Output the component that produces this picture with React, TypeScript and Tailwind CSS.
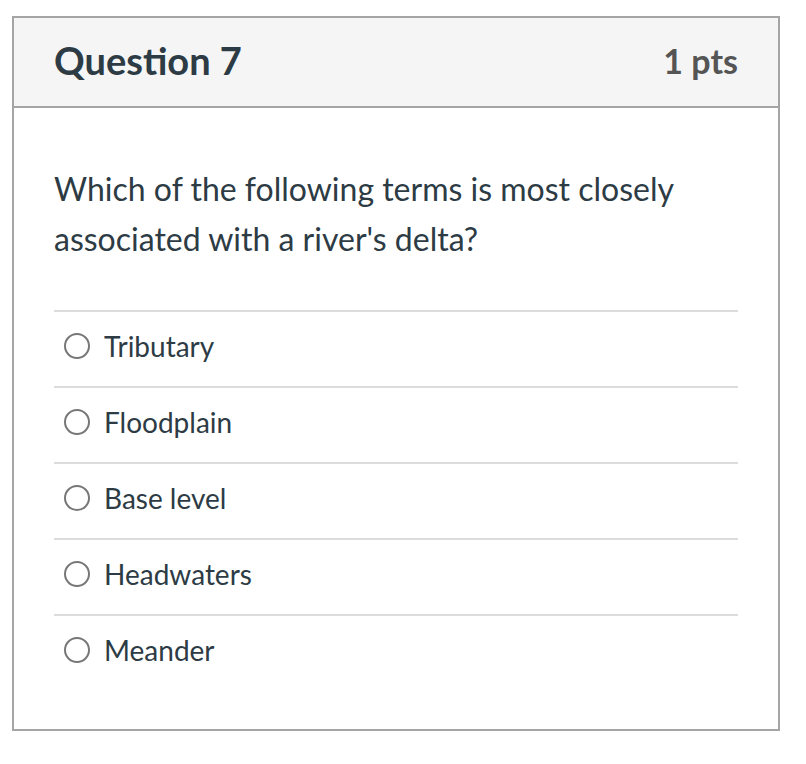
import { useState } from "react";

const answers = ["Tributary", "Floodplain", "Base level", "Headwaters", "Meander"];

export default function App() {
  const [picked, setPicked] = useState<string | null>(null);

  return (
    <div className="min-h-[764px] bg-white pl-3 pt-4 font-['Lato','Liberation_Sans',sans-serif] text-[#2d3b45]">
      <div className="w-[768px] border-2 border-[#a5a5a5]">
        <div className="flex h-[90px] items-center justify-between border-b-2 border-[#a5a5a5] bg-[#f5f5f5] px-10 pb-1">
          <h2 className="text-[38px] font-bold">Question 7</h2>
          <span className="text-[34px] font-bold text-[#555555]">1 pts</span>
        </div>
        <div className="px-10 pb-[39px] pt-[56px]">
          <p className="text-[32px] leading-[50px]">
            Which of the following terms is most closely associated with a river's delta?
          </p>
          <div className="mt-[46px]">
            {answers.map((a) => (
              <label
                key={a}
                className="flex h-[76px] cursor-pointer items-center gap-[14px] border-t-2 border-[#dcdcdc] pb-[7px] pl-[10px]"
              >
                <input
                  type="radio"
                  name="q7"
                  checked={picked === a}
                  onChange={() => setPicked(a)}
                  className="h-[26px] w-[26px] appearance-none rounded-full border-2 border-[#777777] bg-white checked:border-[8px] checked:border-[#0374b5]"
                />
                <span className="text-[28px]">{a}</span>
              </label>
            ))}
          </div>
        </div>
      </div>
    </div>
  );
}
